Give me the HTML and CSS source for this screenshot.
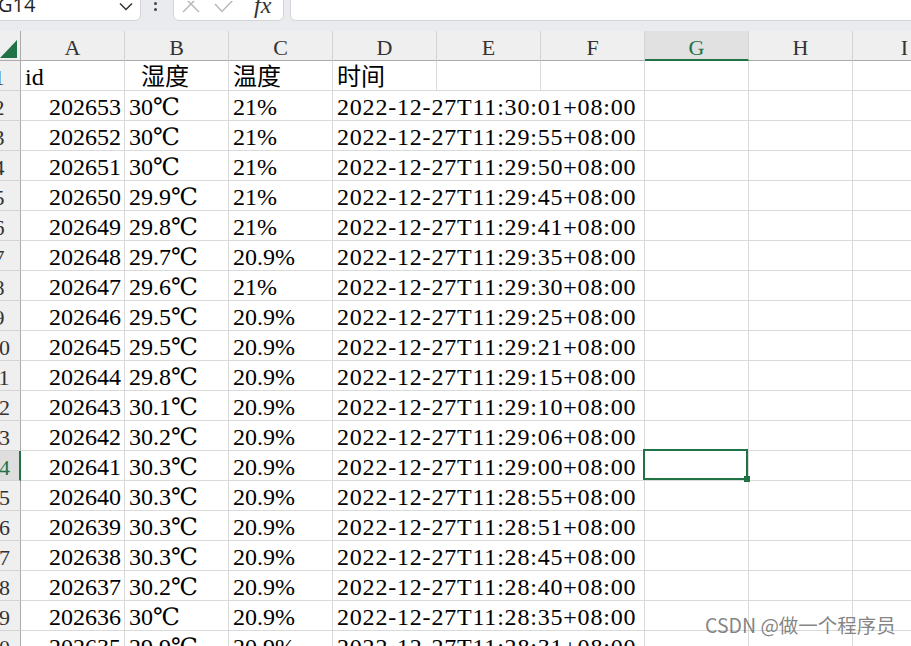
FILE: index.html
```html
<!DOCTYPE html>
<html lang="zh">
<head>
<meta charset="utf-8">
<title>Sheet</title>
<link rel="stylesheet" href="styles.css">
</head>
<body>
<div class="topbar">
  <div class="namebox">
    <span class="cellref">G14</span>
    <svg class="chev" width="14" height="9" viewBox="0 0 14 9"><path d="M1 1.5 L7 7.5 L13 1.5" fill="none" stroke="#333" stroke-width="1.5"/></svg>
  </div>
  <div class="dots"><i></i><i></i></div>
  <div class="fbtns">
    <svg class="xicon" width="18" height="12" viewBox="0 0 18 12"><path d="M1 -5 L17 11 M17 -5 L1 11" fill="none" stroke="#b9b9b9" stroke-width="1.5"/></svg>
    <svg class="ckicon" width="20" height="12" viewBox="0 0 20 12"><path d="M1 3 L8 10.5 L19 -1" fill="none" stroke="#b9b9b9" stroke-width="1.5"/></svg>
    <span class="fx">fx</span>
  </div>
  <div class="finput"></div>
</div>

<div class="sheet">
  <div class="corner"><svg width="17" height="18" viewBox="0 0 17 18"><path d="M17 0 L17 18 L0 18 Z" fill="#217346"/></svg></div>
  <div class="ch">A</div><div class="ch">B</div><div class="ch">C</div><div class="ch">D</div><div class="ch">E</div><div class="ch">F</div><div class="ch sel">G</div><div class="ch">H</div><div class="ch">I</div>

  <div class="rh"><span>1</span></div><div class="c">id</div><div class="c">&nbsp;&nbsp;湿度</div><div class="c">温度</div><div class="c">时间</div><div class="c"></div><div class="c"></div><div class="c"></div><div class="c"></div><div class="c"></div>

  <div class="rh"><span>2</span></div><div class="c num">202653</div><div class="c">30℃</div><div class="c">21%</div><div class="c dt">2022-12-27T11:30:01+08:00</div><div class="c"></div><div class="c"></div><div class="c"></div>
  <div class="rh"><span>3</span></div><div class="c num">202652</div><div class="c">30℃</div><div class="c">21%</div><div class="c dt">2022-12-27T11:29:55+08:00</div><div class="c"></div><div class="c"></div><div class="c"></div>
  <div class="rh"><span>4</span></div><div class="c num">202651</div><div class="c">30℃</div><div class="c">21%</div><div class="c dt">2022-12-27T11:29:50+08:00</div><div class="c"></div><div class="c"></div><div class="c"></div>
  <div class="rh"><span>5</span></div><div class="c num">202650</div><div class="c">29.9℃</div><div class="c">21%</div><div class="c dt">2022-12-27T11:29:45+08:00</div><div class="c"></div><div class="c"></div><div class="c"></div>
  <div class="rh"><span>6</span></div><div class="c num">202649</div><div class="c">29.8℃</div><div class="c">21%</div><div class="c dt">2022-12-27T11:29:41+08:00</div><div class="c"></div><div class="c"></div><div class="c"></div>
  <div class="rh"><span>7</span></div><div class="c num">202648</div><div class="c">29.7℃</div><div class="c">20.9%</div><div class="c dt">2022-12-27T11:29:35+08:00</div><div class="c"></div><div class="c"></div><div class="c"></div>
  <div class="rh"><span>8</span></div><div class="c num">202647</div><div class="c">29.6℃</div><div class="c">21%</div><div class="c dt">2022-12-27T11:29:30+08:00</div><div class="c"></div><div class="c"></div><div class="c"></div>
  <div class="rh"><span>9</span></div><div class="c num">202646</div><div class="c">29.5℃</div><div class="c">20.9%</div><div class="c dt">2022-12-27T11:29:25+08:00</div><div class="c"></div><div class="c"></div><div class="c"></div>
  <div class="rh"><span>10</span></div><div class="c num">202645</div><div class="c">29.5℃</div><div class="c">20.9%</div><div class="c dt">2022-12-27T11:29:21+08:00</div><div class="c"></div><div class="c"></div><div class="c"></div>
  <div class="rh"><span>11</span></div><div class="c num">202644</div><div class="c">29.8℃</div><div class="c">20.9%</div><div class="c dt">2022-12-27T11:29:15+08:00</div><div class="c"></div><div class="c"></div><div class="c"></div>
  <div class="rh"><span>12</span></div><div class="c num">202643</div><div class="c">30.1℃</div><div class="c">20.9%</div><div class="c dt">2022-12-27T11:29:10+08:00</div><div class="c"></div><div class="c"></div><div class="c"></div>
  <div class="rh"><span>13</span></div><div class="c num">202642</div><div class="c">30.2℃</div><div class="c">20.9%</div><div class="c dt">2022-12-27T11:29:06+08:00</div><div class="c"></div><div class="c"></div><div class="c"></div>
  <div class="rh sel"><span>14</span></div><div class="c num">202641</div><div class="c">30.3℃</div><div class="c">20.9%</div><div class="c dt">2022-12-27T11:29:00+08:00</div><div class="c active"></div><div class="c"></div><div class="c"></div>
  <div class="rh"><span>15</span></div><div class="c num">202640</div><div class="c">30.3℃</div><div class="c">20.9%</div><div class="c dt">2022-12-27T11:28:55+08:00</div><div class="c"></div><div class="c"></div><div class="c"></div>
  <div class="rh"><span>16</span></div><div class="c num">202639</div><div class="c">30.3℃</div><div class="c">20.9%</div><div class="c dt">2022-12-27T11:28:51+08:00</div><div class="c"></div><div class="c"></div><div class="c"></div>
  <div class="rh"><span>17</span></div><div class="c num">202638</div><div class="c">30.3℃</div><div class="c">20.9%</div><div class="c dt">2022-12-27T11:28:45+08:00</div><div class="c"></div><div class="c"></div><div class="c"></div>
  <div class="rh"><span>18</span></div><div class="c num">202637</div><div class="c">30.2℃</div><div class="c">20.9%</div><div class="c dt">2022-12-27T11:28:40+08:00</div><div class="c"></div><div class="c"></div><div class="c"></div>
  <div class="rh"><span>19</span></div><div class="c num">202636</div><div class="c">30℃</div><div class="c">20.9%</div><div class="c dt">2022-12-27T11:28:35+08:00</div><div class="c"></div><div class="c"></div><div class="c"></div>
  <div class="rh"><span>20</span></div><div class="c num">202635</div><div class="c">29.9℃</div><div class="c">20.9%</div><div class="c dt">2022-12-27T11:28:31+08:00</div><div class="c"></div><div class="c"></div><div class="c"></div>
</div>

<div class="watermark">CSDN @做一个程序员</div>
</body>
</html>
```

FILE: styles.css
```css
* { box-sizing: border-box; }
html, body { margin: 0; padding: 0; }
body {
  width: 911px;
  height: 646px;
  overflow: hidden;
  position: relative;
  background: #ffffff;
  font-family: "Liberation Serif", "DejaVu Serif", "Noto Sans CJK SC", serif;
  color: #000;
}

/* formula bar */
.topbar {
  height: 31px;
  background: #e9ebee;
  display: flex;
  align-items: flex-start;
  overflow: hidden;
}
.namebox {
  width: 142px;
  height: 22px;
  margin-top: -1px;
  margin-left: -1px;
  background: #fff;
  border: 1px solid #d2d4d7;
  border-radius: 0 0 6px 0;
  display: flex;
  align-items: flex-start;
  justify-content: space-between;
  padding-right: 7px;
  overflow: hidden;
}
.cellref {
  font-family: "Open Sans", "Noto Sans", sans-serif;
  font-size: 20px;
  line-height: 20px;
  margin-top: -5px;
  margin-left: -2px;
  color: #1f1f1f;
}
.chev { margin-top: 2px; }
.dots {
  width: 4px;
  margin-left: 13px;
  margin-top: 2px;
  display: flex;
  flex-direction: column;
  gap: 3px;
}
.dots i {
  display: block;
  width: 3px;
  height: 3px;
  border-radius: 50%;
  background: #444;
}
.fbtns {
  width: 111px;
  height: 22px;
  margin-top: -1px;
  margin-left: 15px;
  background: #fff;
  border: 1px solid #d2d4d7;
  border-radius: 0 0 6px 6px;
  display: flex;
  align-items: flex-start;
  padding-left: 8px;
  overflow: hidden;
}
.xicon { margin-top: 1px; }
.ckicon { margin-top: 1px; margin-left: 14px; }
.fx {
  font-family: "Liberation Serif", serif;
  font-style: italic;
  font-size: 24px;
  line-height: 20px;
  margin-top: -5px;
  margin-left: 20px;
  color: #333;
}
.finput {
  flex: 1;
  height: 22px;
  margin-top: -1px;
  margin-left: 6px;
  margin-right: -2px;
  background: #fff;
  border: 1px solid #d2d4d7;
  border-radius: 0 0 0 6px;
}

/* grid */
.sheet {
  display: grid;
  grid-template-columns: 21px repeat(9, 104px);
  grid-auto-rows: 30px;
  width: 911px;
  overflow: hidden;
}
.c {
  border-right: 1px solid #dadada;
  border-bottom: 1px solid #dadada;
  font-size: 24px;
  line-height: 26px;
  padding: 3px 4px 0 4px;
  white-space: nowrap;
  overflow: hidden;
}
.num { text-align: right; padding-right: 3px; }
.dt { grid-column: span 3; letter-spacing: 0.8px; }

.corner {
  background: #efefef;
  border-right: 1px solid #ababab;
  border-bottom: 1px solid #ababab;
  display: flex;
  align-items: flex-end;
  justify-content: flex-end;
  padding: 0 3px 2px 0;
}
.corner svg { display: block; }
.ch {
  background: #efefef;
  border-right: 1px solid #d4d4d4;
  border-bottom: 1px solid #ababab;
  font-size: 22px;
  line-height: 25px;
  padding-top: 4px;
  text-align: center;
  color: #333;
}
.ch.sel {
  background: #e1e1e1;
  color: #217346;
  border-bottom: 2px solid #217346;
}
.rh {
  background: #efefef;
  border-right: 1px solid #ababab;
  border-bottom: 1px solid #d4d4d4;
  overflow: hidden;
  font-size: 22px;
  line-height: 25px;
  padding-top: 4px;
  color: #333;
}
.rh span {
  display: block;
  width: 46px;
  margin-left: -24px;
  text-align: center;
}
.rh.sel {
  background: #dedede;
  color: #217346;
  border-right: 2px solid #217346;
}
.active {
  position: relative;
  overflow: visible;
}
.active::after {
  content: "";
  position: absolute;
  left: -2px;
  top: -2px;
  right: 0;
  bottom: 0;
  border: 2px solid #217346;
}
.active::before {
  content: "";
  position: absolute;
  right: -2px;
  bottom: -2px;
  width: 6px;
  height: 6px;
  background: #217346;
  z-index: 1;
}

.watermark {
  position: absolute;
  left: 705px;
  top: 611px;
  font-family: "Noto Sans CJK SC", sans-serif;
  font-size: 19.5px;
  line-height: 28px;
  color: rgba(110, 110, 110, 0.85);
  white-space: nowrap;
}
```
